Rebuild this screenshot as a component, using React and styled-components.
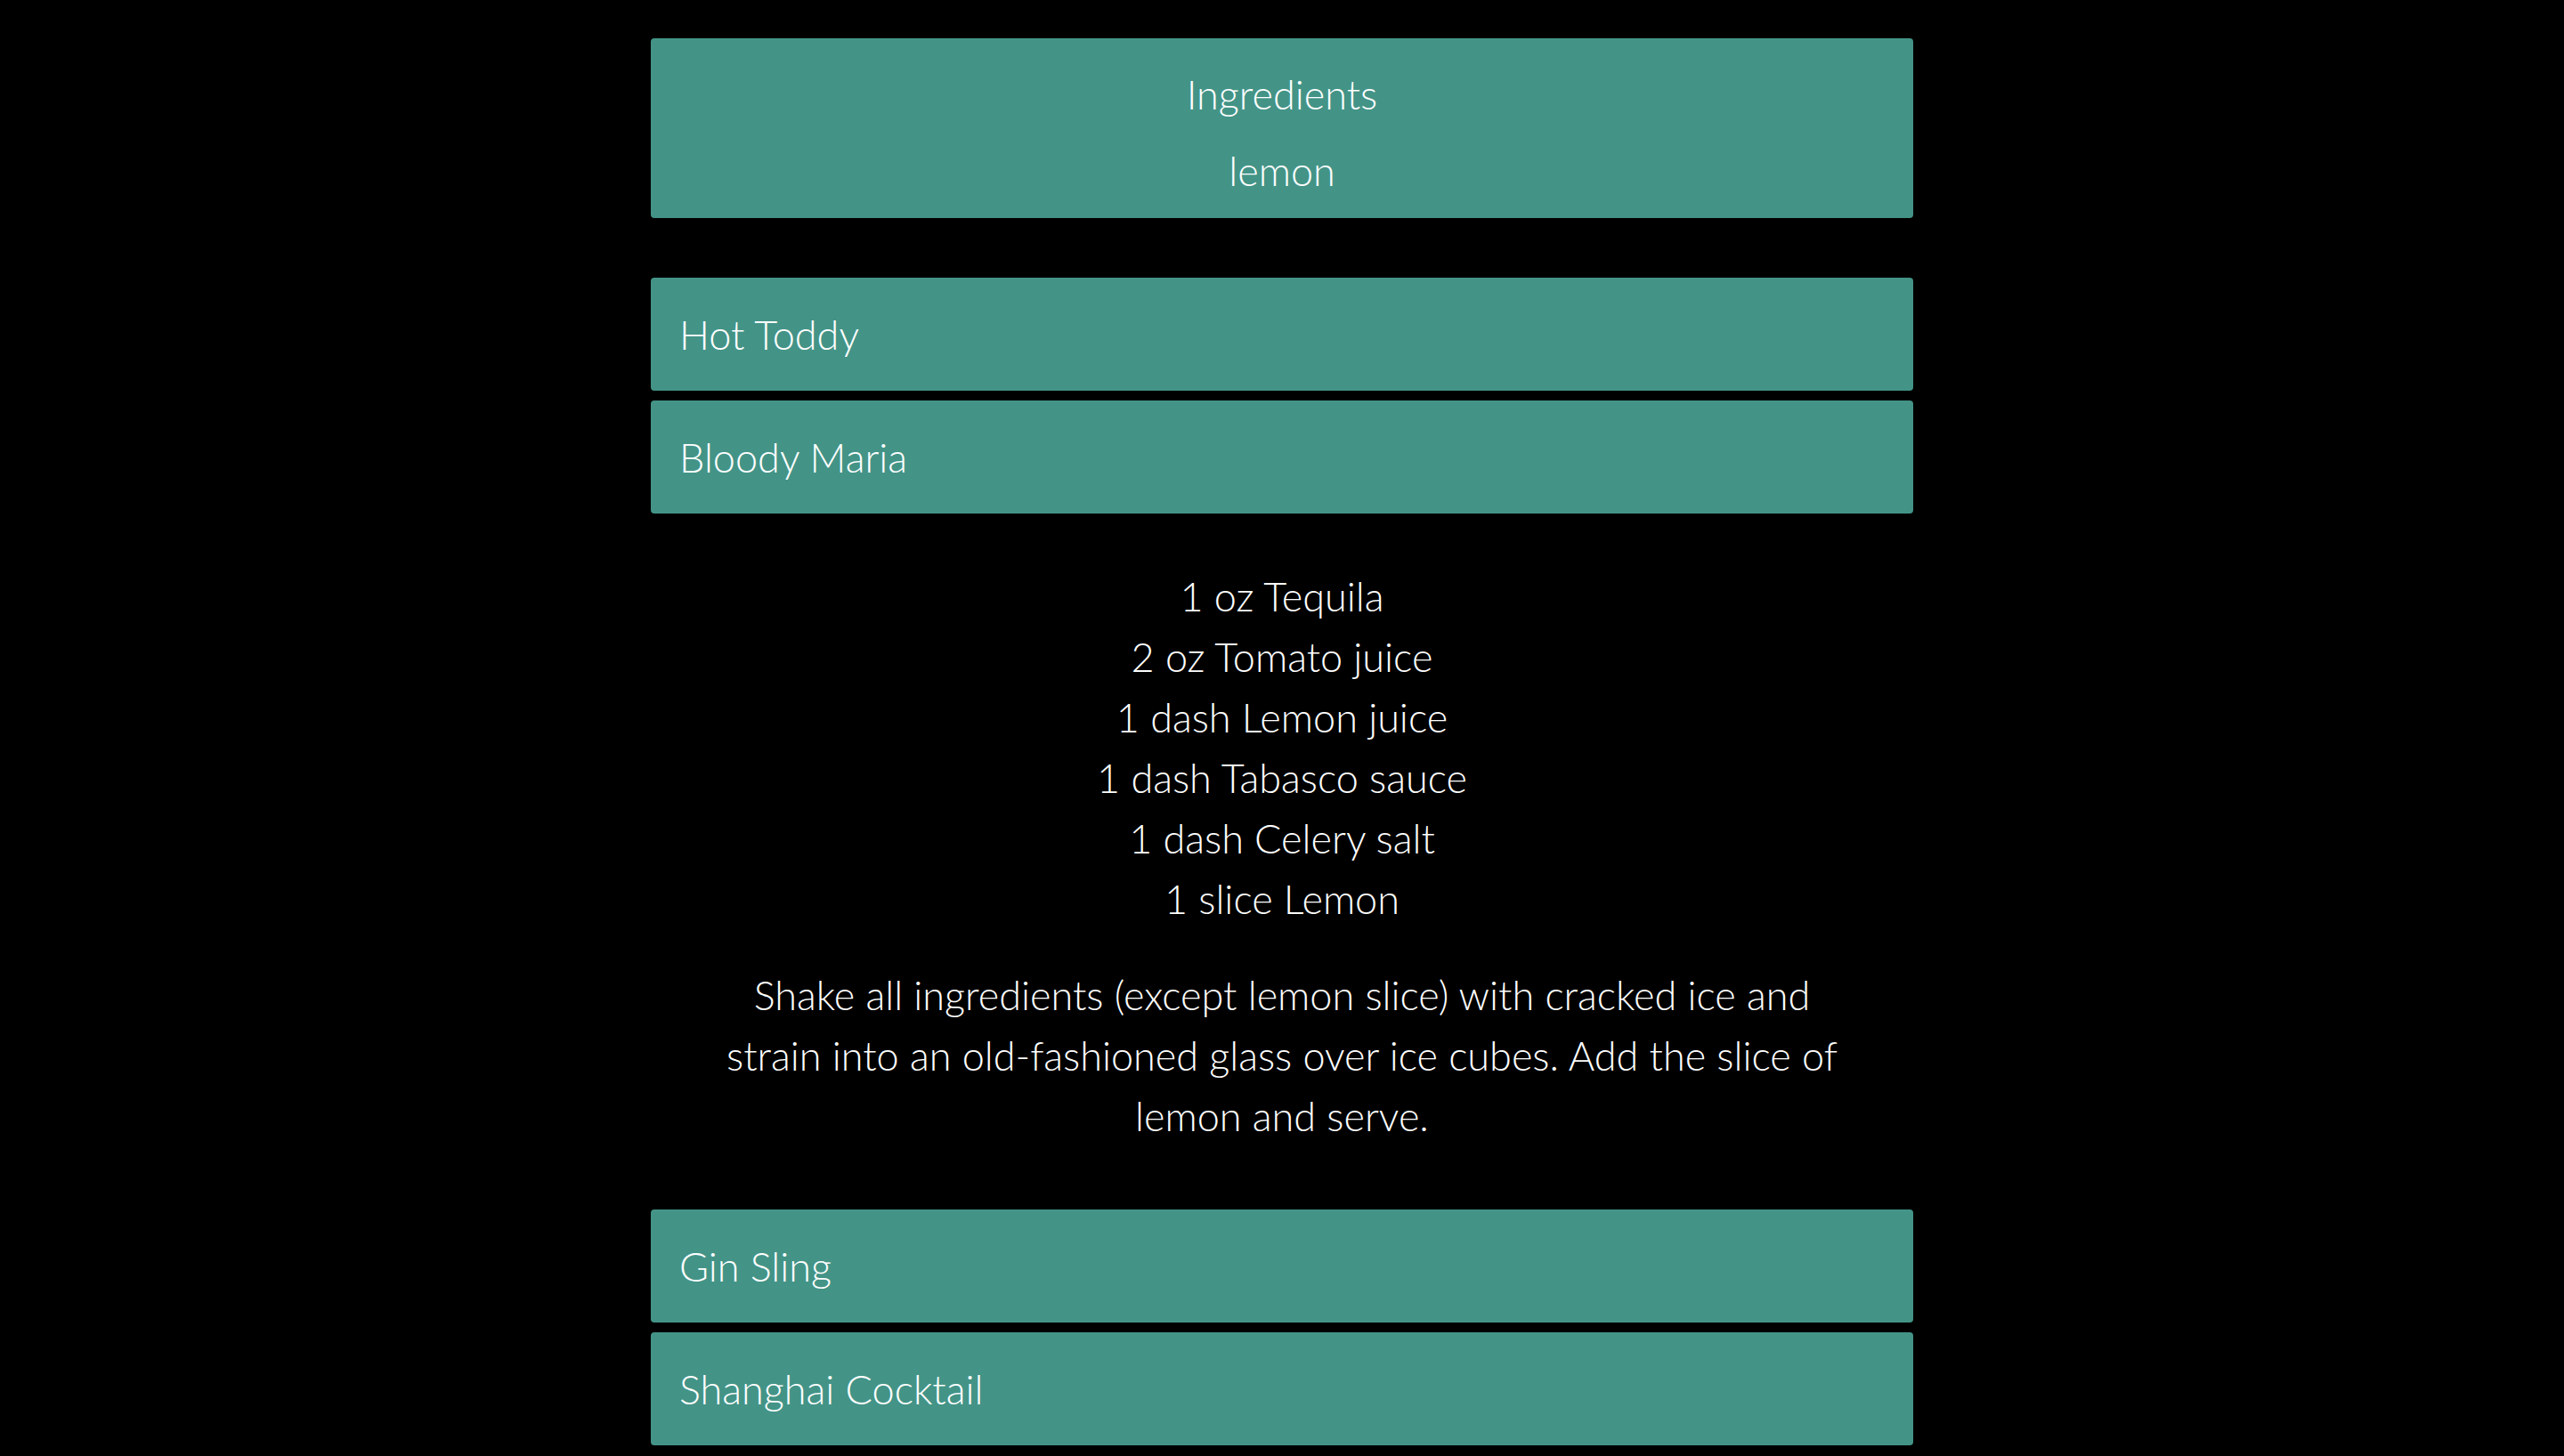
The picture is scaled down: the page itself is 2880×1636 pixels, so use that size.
import React from "react";
import styled, { createGlobalStyle } from "styled-components";

const drinks = ["Hot Toddy", "Bloody Maria", "Gin Sling", "Shanghai Cocktail"];

const openDrink = {
  name: "Bloody Maria",
  ingredients: [
    "1 oz Tequila",
    "2 oz Tomato juice",
    "1 dash Lemon juice",
    "1 dash Tabasco sauce",
    "1 dash Celery salt",
    "1 slice Lemon",
  ],
  instructions:
    "Shake all ingredients (except lemon slice) with cracked ice and strain into an old-fashioned glass over ice cubes. Add the slice of lemon and serve.",
};

const GlobalStyle = createGlobalStyle`
  html, body {
    margin: 0;
    padding: 0;
    background: #000000;
  }
  body {
    font-family: Lato, "Open Sans", sans-serif;
    font-weight: 300;
    color: #ffffff;
  }
`;

const Main = styled.main`
  width: 1418px;
  margin: 0 auto;
  padding-top: 43px;
  box-sizing: border-box;
`;

const SearchCard = styled.section`
  display: flex;
  flex-direction: column;
  align-items: center;
  background: #439487;
  border-radius: 4px;
  padding: 20px 0 10px;
`;

const SearchLine = styled.div`
  font-size: 45px;
  line-height: 86px;
`;

const DrinkList = styled.div`
  display: flex;
  flex-direction: column;
  gap: 11px;
  margin-top: 67px;
`;

const DrinkRow = styled.div`
  display: flex;
  align-items: center;
  height: 127px;
  padding-left: 32px;
  background: #439487;
  border-radius: 4px;
  font-size: 45px;
  cursor: pointer;
`;

const Details = styled.div`
  display: flex;
  flex-direction: column;
  align-items: center;
  padding: 48px 0 60px;
  text-align: center;
`;

const IngredientList = styled.ul`
  list-style: none;
  margin: 0;
  padding: 0;
`;

const Ingredient = styled.li`
  font-size: 45px;
  line-height: 68px;
`;

const Instructions = styled.p`
  width: 1290px;
  margin: 40px 0 0;
  font-size: 45px;
  line-height: 68px;
`;

export default function App() {
  return (
    <>
      <GlobalStyle />
      <Main>
        <SearchCard>
          <SearchLine>Ingredients</SearchLine>
          <SearchLine>lemon</SearchLine>
        </SearchCard>
        <DrinkList>
          {drinks.map((name) => (
            <React.Fragment key={name}>
              <DrinkRow>{name}</DrinkRow>
              {name === openDrink.name && (
                <Details>
                  <IngredientList>
                    {openDrink.ingredients.map((item) => (
                      <Ingredient key={item}>{item}</Ingredient>
                    ))}
                  </IngredientList>
                  <Instructions>{openDrink.instructions}</Instructions>
                </Details>
              )}
            </React.Fragment>
          ))}
        </DrinkList>
      </Main>
    </>
  );
}
